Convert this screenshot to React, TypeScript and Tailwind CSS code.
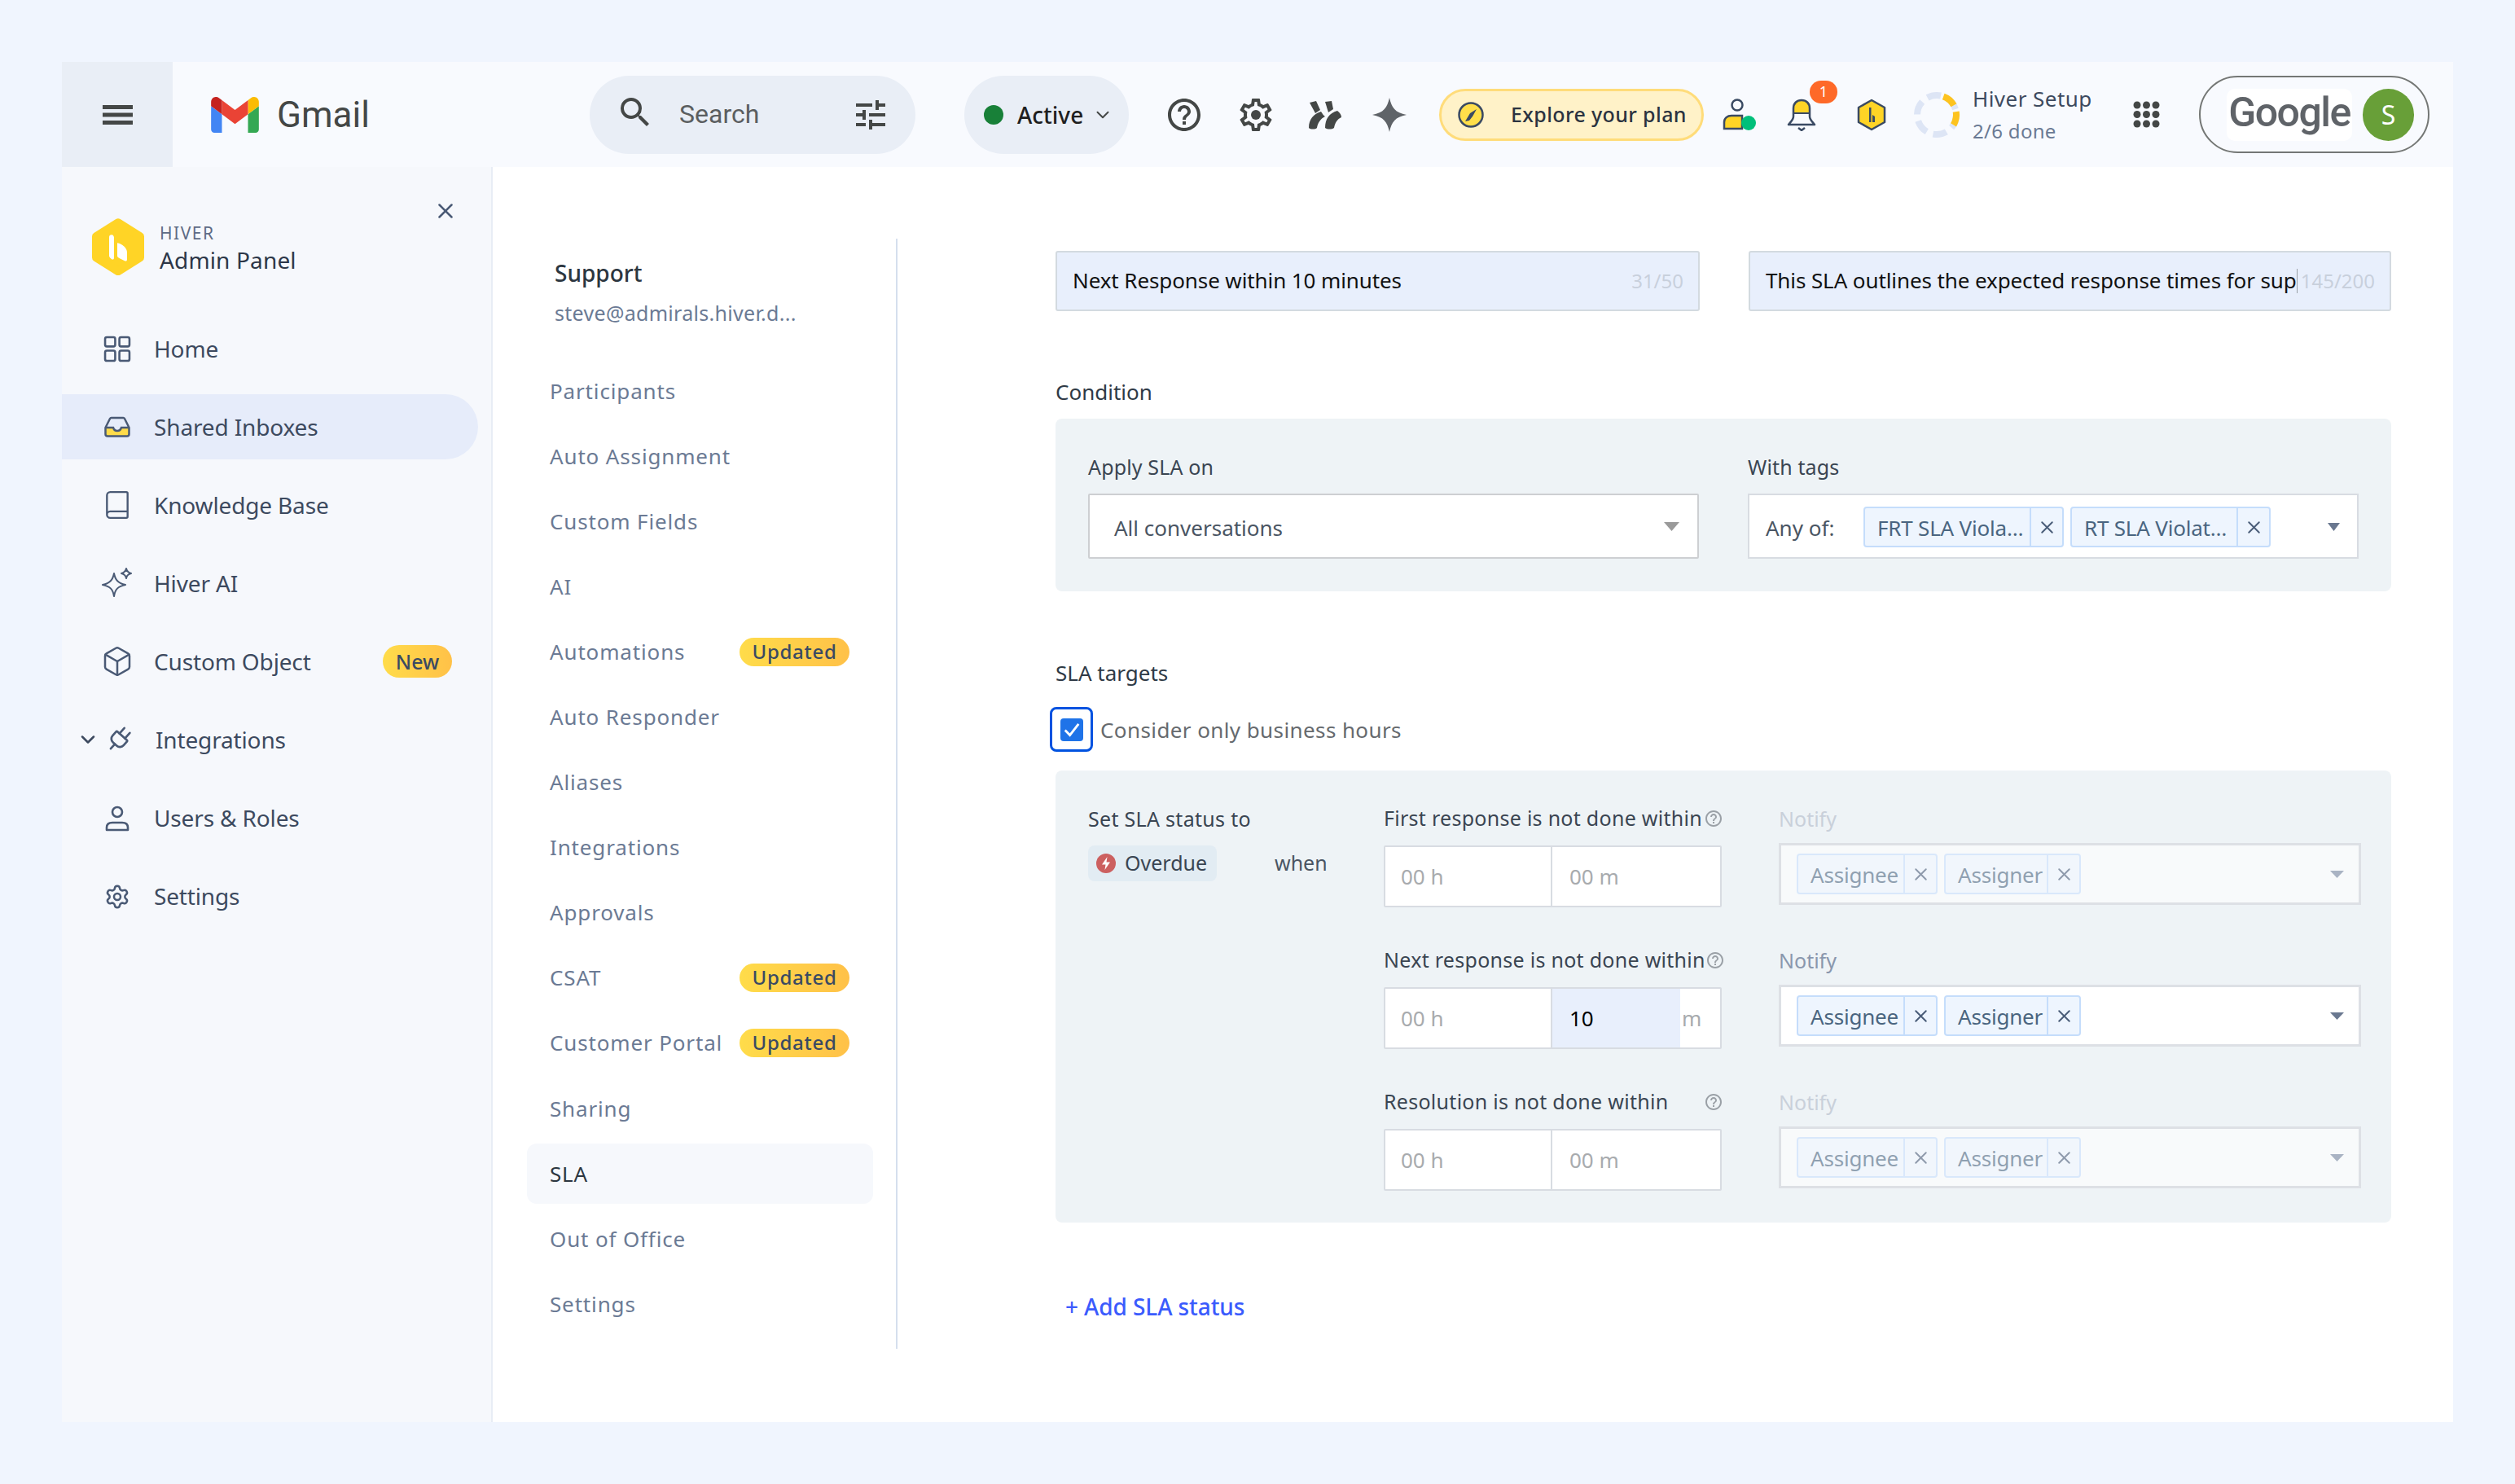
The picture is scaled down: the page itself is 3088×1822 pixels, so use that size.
import React from "react";
import { Book, Box, Plug, Settings, ChevronDown, X } from "lucide-react";

const GearPath = "M19.43 12.98c.04-.32.07-.64.07-.98 0-.34-.03-.66-.07-.98l2.11-1.65c.19-.15.24-.42.12-.64l-2-3.46c-.09-.16-.26-.25-.44-.25-.06 0-.12.01-.17.03l-2.49 1c-.52-.4-1.08-.73-1.69-.98l-.38-2.65C14.46 2.18 14.25 2 14 2h-4c-.25 0-.46.18-.49.42l-.38 2.65c-.61.25-1.17.59-1.69.98l-2.49-1c-.06-.02-.12-.03-.18-.03-.17 0-.34.09-.43.25l-2 3.46c-.13.22-.07.49.12.64l2.11 1.65c-.04.32-.07.65-.07.98 0 .33.03.66.07.98l-2.11 1.65c-.19.15-.24.42-.12.64l2 3.46c.09.16.26.25.44.25.06 0 .12-.01.17-.03l2.49-1c.52.4 1.08.73 1.69.98l.38 2.65c.03.24.24.42.49.42h4c.25 0 .46-.18.49-.42l.38-2.65c.61-.25 1.17-.59 1.69-.98l2.49 1c.06.02.12.03.18.03.17 0 .34-.09.43-.25l2-3.46c.12-.22.07-.49-.12-.64l-2.11-1.65zm-1.98-1.71c.04.31.05.52.05.73 0 .21-.02.43-.05.73l-.14 1.13.89.7 1.08.84-.7 1.21-1.27-.51-1.04-.42-.9.68c-.43.32-.84.56-1.25.73l-1.06.43-.16 1.13-.2 1.35h-1.4l-.19-1.35-.16-1.13-1.06-.43c-.43-.18-.83-.41-1.23-.71l-.91-.7-1.06.43-1.27.51-.7-1.21 1.08-.84.89-.7-.14-1.13c-.03-.31-.05-.54-.05-.74s.02-.43.05-.73l.14-1.13-.89-.7-1.08-.84.7-1.21 1.27.51 1.04.42.9-.68c.43-.32.84-.56 1.25-.73l1.06-.43.16-1.13.2-1.35h1.39l.19 1.35.16 1.13 1.06.43c.43.18.83.41 1.23.71l.91.7 1.06-.43 1.27-.51.7 1.21-1.07.85-.89.7.14 1.13z";

function HiverHex({ size = 64 }: { size?: number }) {
  return (
    <svg width={size} height={size * 1.1} viewBox="0 0 64 70" className="shrink-0">
      <polygon points="32,5 59,22 59,48 32,65 5,48 5,22" fill="#ffd426" stroke="#ffd426" strokeWidth="10" strokeLinejoin="round" />
      <path d="M24 20c2 0 3 2 3 4v24c0 2-1 3-3 2l-2-2c-1-1-1-2-1-3V23c0-2 1-3 3-3z" fill="#fff" />
      <path d="M31 30c6 1 12 6 12 12v8c0 2-1 3-3 2l-6-3c-2-1-3-2-3-3z" fill="#fff" />
    </svg>
  );
}

function MenuRow({ icon, label, active, badge, chevron }: { icon: React.ReactNode; label: string; active?: boolean; badge?: string; chevron?: boolean }) {
  return (
    <div className={`flex h-[80px] w-[511px] items-center rounded-r-full pr-[32px] ${active ? "bg-[#e6ecfa]" : ""} ${chevron ? "pl-[20px]" : "pl-[48px]"}`}>
      {chevron && <ChevronDown className="ml-[-2px] h-[28px] w-[28px] text-[#3d4a5f]" strokeWidth={2.2} />}
      <div className={`flex h-[40px] w-[40px] shrink-0 items-center justify-center ${chevron ? "ml-[4px]" : ""}`}>{icon}</div>
      <span className="mb-[1px] ml-[25px] text-[28px] leading-[36px] tracking-[-0.15px] text-[#3d4a5f]">{label}</span>
      {badge && (
        <span className="ml-auto flex h-[40px] w-[85px] items-center justify-center rounded-full bg-gradient-to-r from-[#ffdc4a] to-[#ffc148] text-[25px] font-medium text-[#3a4a63]">{badge}</span>
      )}
    </div>
  );
}

function NavRow({ label, badge, active }: { label: string; badge?: boolean; active?: boolean }) {
  return (
    <div className={`ml-[42px] flex h-[74px] w-[425px] items-center rounded-[12px] pl-[28px] pr-[29px] ${active ? "bg-[#f6f8fc]" : ""}`}>
      <span className={`text-[26px] leading-[36px] tracking-[0.85px] ${active ? "text-[#2c3640]" : "text-[#6b7a94]"}`}>{label}</span>
      {badge && (
        <span className="ml-auto flex h-[35px] w-[135px] items-center justify-center rounded-full bg-gradient-to-r from-[#ffdc4a] to-[#ffc148] text-[24px] font-medium tracking-[0.7px] text-[#3a4a63]">Updated</span>
      )}
    </div>
  );
}

function Tri({ color, w = 18, h = 10 }: { color: string; w?: number; h?: number }) {
  return (
    <svg width={w} height={h} viewBox="0 0 18 10" preserveAspectRatio="none" className="shrink-0">
      <path d="M0 0h18L9 10z" fill={color} />
    </svg>
  );
}

function Chip({ text, w, div, muted }: { text: string; w: string; div: string; muted?: boolean }) {
  return (
    <div className={`flex h-[50px] shrink-0 rounded-[4px] border-2 border-[#c5ddfb] bg-[#eef5fe] ${w} ${muted ? "opacity-60" : ""}`}>
      <div className={`flex items-center overflow-hidden whitespace-nowrap border-r-2 border-[#c5ddfb] pl-[15px] pt-[2px] text-[26px] tracking-[-0.2px] text-[#4a6580] ${div}`}>{text}</div>
      <div className="flex flex-1 items-center justify-center">
        <X className="h-[25px] w-[25px] text-[#4a5d78]" strokeWidth={1.9} />
      </div>
    </div>
  );
}

function NotifyBox({ muted }: { muted?: boolean }) {
  return (
    <div>
      <div className={`text-[25px] leading-[36px] ${muted ? "text-[#c9d0da]" : "text-[#8a97ad]"}`}>Notify</div>
      <div className={`mt-[12px] flex h-[76px] w-[715px] items-center border-[3px] border-[#dde0e5] pl-[19px] pr-[18px] ${muted ? "bg-[#f8fafb]" : "bg-white"}`}>
        <Chip text="Assignee" w="w-[173px]" div="w-[131px]" muted={muted} />
        <div className="w-[8px] shrink-0" />
        <Chip text="Assigner" w="w-[168px]" div="w-[126px]" muted={muted} />
        <div className="ml-auto">
          <Tri color={muted ? "#a9b3c3" : "#6a7890"} w={17} h={9} />
        </div>
      </div>
    </div>
  );
}

function HelpDot() {
  return (
    <svg width="24" height="24" viewBox="0 0 24 24" className="mr-[-2px] shrink-0" fill="#9aa0a6">
      <path d="M11 18h2v-2h-2v2zm1-16C6.48 2 2 6.48 2 12s4.48 10 10 10 10-4.48 10-10S17.52 2 12 2zm0 18c-4.41 0-8-3.59-8-8s3.59-8 8-8 8 3.59 8 8-3.59 8-8 8zm0-14c-2.21 0-4 1.79-4 4h2c0-1.1.9-2 2-2s2 .9 2 2c0 2-3 1.75-3 5h2c0-2.25 3-2.5 3-5 0-2.21-1.79-4-4-4z" />
    </svg>
  );
}

function TimeInput({ filled }: { filled?: boolean }) {
  return (
    <div className="mt-[15px] flex h-[76px] w-[415px] rounded-[2px] border-2 border-[#d8dce2] bg-white text-[26px] text-[#a8abae]">
      <div className="flex w-[205px] items-center border-r-2 border-[#d8dce2] pl-[19px]">00 h</div>
      {filled ? (
        <div className="flex flex-1 items-center">
          <div className="flex h-full w-[157px] items-center bg-[#e8effc] pl-[21px] text-black">10</div>
          <span className="ml-[2px]">m</span>
        </div>
      ) : (
        <div className="flex flex-1 items-center pl-[21px]">00 m</div>
      )}
    </div>
  );
}

function TargetRow({ label, filled, muted }: { label: string; filled?: boolean; muted?: boolean }) {
  return (
    <div className="flex h-[174px]">
      <div className="w-[415px] shrink-0">
        <div className="flex h-[36px] items-center justify-between whitespace-nowrap text-[25px] tracking-[0.28px] text-[#3a4552]">
          <span>{label}</span>
          <HelpDot />
        </div>
        <TimeInput filled={filled} />
      </div>
      <div className="ml-[70px]">
        <NotifyBox muted={muted} />
      </div>
    </div>
  );
}

const navItems: [string, boolean?][] = [
  ["Participants"],
  ["Auto Assignment"],
  ["Custom Fields"],
  ["AI"],
  ["Automations", true],
  ["Auto Responder"],
  ["Aliases"],
  ["Integrations"],
  ["Approvals"],
  ["CSAT", true],
  ["Customer Portal", true],
  ["Sharing"],
];

export default function App() {
  const sc = "#4a5a75";
  return (
    <div className="min-h-[1822px] bg-[#f0f5fe] pl-[76px] pt-[76px] font-['Noto_Sans',sans-serif]">
      <div className="flex h-[1670px] w-[2936px] flex-col bg-white">
        {/* top bar */}
        <div className="flex h-[129px] shrink-0 items-center bg-[#f8fafe]">
          <div className="flex h-full w-[136px] shrink-0 items-center justify-center bg-[#e9eef6]">
            <svg width="37" height="24" viewBox="0 0 37 24" fill="#444746">
              <rect width="37" height="5" />
              <rect y="9.5" width="37" height="5" />
              <rect y="19" width="37" height="5" />
            </svg>
          </div>
          <div className="flex w-[512px] shrink-0 items-center pl-[47px]">
            <svg width="59" height="44" viewBox="52 42 88 66">
              <path fill="#4285f4" d="M58 108h14V74L52 59v43c0 3.32 2.69 6 6 6" />
              <path fill="#34a853" d="M120 108h14c3.32 0 6-2.69 6-6V59l-20 15" />
              <path fill="#fbbc04" d="M120 48v26l20-15v-8c0-7.42-8.47-11.65-14.4-7.2" />
              <path fill="#ea4335" d="M72 74V48l24 18 24-18v26L96 92" />
              <path fill="#c5221f" d="M52 51v8l20 15V48l-5.6-4.2c-5.94-4.45-14.4-.22-14.4 7.2" />
            </svg>
            <span className="ml-[22px] font-['Roboto',sans-serif] text-[44px] leading-none text-[#444746]">Gmail</span>
          </div>
          <div className="flex h-[96px] w-[400px] shrink-0 items-center rounded-full bg-[#e9eef6] pl-[32px]">
            <svg width="48" height="48" viewBox="0 0 24 24" fill="#444746" className="mb-[5px]">
              <path d="M15.5 14h-.79l-.28-.27A6.471 6.471 0 0 0 16 9.5 6.5 6.5 0 1 0 9.5 16c1.61 0 3.09-.59 4.23-1.57l.27.28v.79l5 4.99L20.49 19l-4.99-5zm-6 0C7.01 14 5 11.99 5 9.5S7.01 5 9.5 5 14 7.01 14 9.5 11.99 14 9.5 14z" />
            </svg>
            <span className="mb-[2px] ml-[30px] font-['Roboto',sans-serif] text-[32px] text-[#5b5e60]">Search</span>
            <svg width="48" height="48" viewBox="0 0 24 24" fill="#444746" className="ml-auto mr-[31px]">
              <path d="M3 17v2h6v-2H3zM3 5v2h10V5H3zm10 16v-2h8v-2h-8v-2h-2v6h2zM7 9v2H3v2h4v2h2V9H7zm14 4v-2H11v2h10zm-6-4h2V7h4V5h-4V3h-2v6z" />
            </svg>
          </div>
          <div className="ml-[60px] flex h-[96px] w-[202px] shrink-0 items-center rounded-full bg-[#e9eef6] pl-[24px]">
            <span className="h-[24px] w-[24px] rounded-full bg-[#188038]" />
            <span className="ml-[17px] text-[28px] font-medium text-[#1f1f1f]">Active</span>
            <ChevronDown className="ml-[11px] h-[26px] w-[26px] text-[#444746]" strokeWidth={1.8} />
          </div>
          <svg width="48" height="48" viewBox="0 0 24 24" fill="#444746" className="ml-[44px] shrink-0">
            <path d="M11 18h2v-2h-2v2zm1-16C6.48 2 2 6.48 2 12s4.48 10 10 10 10-4.48 10-10S17.52 2 12 2zm0 18c-4.41 0-8-3.59-8-8s3.59-8 8-8 8 3.59 8 8-3.59 8-8 8zm0-14c-2.21 0-4 1.79-4 4h2c0-1.1.9-2 2-2s2 .9 2 2c0 2-3 1.75-3 5h2c0-2.25 3-2.5 3-5 0-2.21-1.79-4-4-4z" />
          </svg>
          <svg width="48" height="48" viewBox="0 0 24 24" fill="#444746" className="ml-[40px] shrink-0">
            <path d={GearPath} />
            <circle cx="12" cy="12" r="3" />
          </svg>
          <svg width="42" height="36" viewBox="0 0 42 36" fill="#444746" className="ml-[40px] shrink-0">
            <path d="M2 3l8-2 5 11-6 4z" />
            <path d="M21 2l8-1 2 10-6 4z" />
            <path d="M1 34c0-11 6-17 15-20 2 3 3 5 5 6-6 3-9 8-10 14-2 2-8 2-10 0z" />
            <path d="M21 34c0-11 5-18 15-21 3 2 5 5 5 8-5 2-8 7-9 13-3 2-8 2-11 0z" />
          </svg>
          <svg width="42" height="42" viewBox="0 0 24 24" fill="#5f6368" className="ml-[37px] shrink-0">
            <path d="M12 0c1.500 7 4 10.500 12 12-8 1.500-10.500 5-12 12-1.500-7-4-10.500-12-12 8-1.500 10.500-5 12-12z" />
          </svg>
          <div className="ml-[40px] flex h-[64px] w-[325px] shrink-0 items-center rounded-full border-[3px] border-[#ffdc7a] bg-[#fff2c8] pl-[20px]">
            <svg width="32" height="32" viewBox="0 0 32 32" className="shrink-0">
              <circle cx="16" cy="16" r="14.500" fill="#ffdf4a" stroke="#3a4a63" strokeWidth="2.500" />
              <path d="M23 9l-5 9-4 5-5 1 6-10z" fill="#3a4a63" />
            </svg>
            <span className="ml-[33px] pt-[1px] text-[25px] font-medium tracking-[0.38px] text-[#2b3340]">Explore your plan</span>
          </div>
          <svg width="41" height="40" viewBox="0 0 41 40" className="ml-[23px] shrink-0">
            <circle cx="18" cy="8" r="6.500" fill="none" stroke="#3a4a63" strokeWidth="2.500" />
            <path d="M2 37v-8c0-5 4-8 9-8h13v16z" fill="#ffd426" stroke="#3a4a63" strokeWidth="2.500" />
            <circle cx="32" cy="30" r="9" fill="#00bf7a" />
          </svg>
          <div className="relative ml-[38px] h-[40px] w-[36px] shrink-0">
            <svg width="36" height="40" viewBox="0 0 36 40">
              <path d="M8 18V12C8 6 12 2 18 2s10 4 10 10v6z" fill="#ffd426" />
              <path d="M8 12C8 6 12 2 18 2s10 4 10 10v10c0 4 3 6 6 10H2c3-4 6-6 6-10z" fill="none" stroke="#3a4a63" strokeWidth="2.500" strokeLinejoin="round" />
              <path d="M8 18h20" stroke="#3a4a63" strokeWidth="2" />
              <path d="M14 36l4 3 4-3" fill="none" stroke="#3a4a63" strokeWidth="2.500" />
            </svg>
            <span className="absolute left-[28px] top-[-22px] flex h-[28px] w-[34px] items-center justify-center rounded-full bg-[#fe6928] text-[18px] text-white">1</span>
          </div>
          <svg width="36" height="40" viewBox="0 0 36 40" className="ml-[50px] shrink-0">
            <polygon points="18,2 34,11 34,29 18,38 2,29 2,11" fill="#ffd426" stroke="#3a4a63" strokeWidth="2.500" strokeLinejoin="round" />
            <path d="M15 11h2.500v18H15zM19 20l3 2v7h-3z" fill="#3a4a63" />
          </svg>
          <svg width="56" height="56" viewBox="0 0 56 56" className="ml-[34px] shrink-0">
            <circle cx="28" cy="28" r="24" fill="none" stroke="#dde5f5" strokeWidth="8" strokeDasharray="17 8.130" />
            <circle cx="28" cy="28" r="24" fill="none" stroke="#fdc31f" strokeWidth="8" strokeDasharray="17 8.130 17 108.500" transform="rotate(-70 28 28)" />
          </svg>
          <div className="ml-[16px] w-[197px] shrink-0">
            <div className="text-[26px] leading-[38px] tracking-[0.45px] text-[#3d4a5f]">Hiver Setup</div>
            <div className="mt-[2px] text-[24px] leading-[38px] tracking-[0.3px] text-[#6b7a94]">2/6 done</div>
          </div>
          <svg width="33" height="33" viewBox="0 0 33 33" fill="#444746" className="shrink-0">
            <circle cx="5" cy="5" r="4.500" /><circle cx="16.500" cy="5" r="4.500" /><circle cx="28" cy="5" r="4.500" />
            <circle cx="5" cy="16.500" r="4.500" /><circle cx="16.500" cy="16.500" r="4.500" /><circle cx="28" cy="16.500" r="4.500" />
            <circle cx="5" cy="28" r="4.500" /><circle cx="16.500" cy="28" r="4.500" /><circle cx="28" cy="28" r="4.500" />
          </svg>
          <div className="ml-[48px] flex h-[95px] w-[283px] shrink-0 items-center rounded-full border-2 border-[#747775] pl-[32px]">
            <div className="flex h-[64px] w-[154px] items-center justify-center rounded-[10px] bg-white pb-[6px] font-['Roboto',sans-serif] text-[50px] font-medium leading-none tracking-[-1.5px] text-[#5f6368]">Google</div>
            <div className="ml-[13px] flex h-[64px] w-[63px] items-center justify-center rounded-full bg-[#689f38] text-[32px] text-white">S</div>
          </div>
        </div>

        <div className="flex min-h-0 flex-1">
          {/* sidebar */}
          <div className="w-[529px] shrink-0 border-r-2 border-[#e8edf5] bg-[#f6f8fc]">
            <div className="flex h-[183px] items-start pt-[39px]">
              <div className="ml-[37px] mt-[24px] flex items-center">
                <HiverHex />
                <div className="ml-[19px]">
                  <div className="mt-[2px] text-[21px] leading-[28px] tracking-[1.5px] text-[#5e6b85]">HIVER</div>
                  <div className="mt-[1px] text-[28px] leading-[36px] tracking-[0.15px] text-[#2d3748]">Admin Panel</div>
                </div>
              </div>
              <X className="ml-auto mr-[41px] h-[30px] w-[30px] text-[#4a5a75]" strokeWidth={2} />
            </div>
            <div className="flex flex-col gap-[16.1px]">
              <MenuRow label="Home" icon={
                <svg width="34" height="33" viewBox="0 0 32 32" fill="none" stroke={sc} strokeWidth="2.500">
                  <rect x="1.500" y="2" width="12" height="11" rx="2" /><rect x="18.500" y="2" width="12" height="11" rx="2" />
                  <rect x="1.500" y="18" width="12" height="12" rx="2" /><rect x="18.500" y="18" width="12" height="12" rx="2" />
                </svg>
              } />
              <MenuRow active label="Shared Inboxes" icon={
                <svg width="32" height="26" viewBox="0 0 32 26">
                  <path d="M2 14h9c1 3 3 4 5 4s4-1 5-4h9v8a2 2 0 0 1-2 2H4a2 2 0 0 1-2-2z" fill="#ffdc4a" />
                  <path d="M1.500 14 7 3a2 2 0 0 1 2-1h14a2 2 0 0 1 2 1l5.500 11v8a2.500 2.500 0 0 1-2.500 2.500H4A2.500 2.500 0 0 1 1.500 22zM2 14h9c1 3 3 4 5 4s4-1 5-4h9" fill="none" stroke={sc} strokeWidth="2.500" />
                </svg>
              } />
              <MenuRow label="Knowledge Base" icon={<Book className="h-[38px] w-[38px]" color={sc} strokeWidth={1.5} />} />
              <MenuRow label="Hiver AI" icon={
                <svg width="38" height="38" viewBox="0 0 38 38" fill="none" stroke={sc} strokeWidth="2" strokeLinejoin="round">
                  <path d="M15 7c1.500 8 5 12 14 14-9 2-12.500 5-14 14-1.500-9-5-12-14-14 9-2 12.500-6 14-14z" />
                  <path d="M30 1c.6 3 2 5 6 6-4 1-5.400 2.500-6 6-.6-3.500-2-5-6-6 4-1 5.400-3 6-6z" />
                </svg>
              } />
              <MenuRow label="Custom Object" badge="New" icon={<Box className="h-[40px] w-[40px]" color={sc} strokeWidth={1.5} />} />
              <MenuRow chevron label="Integrations" icon={<Plug className="h-[36px] w-[36px] rotate-[42deg]" color={sc} strokeWidth={1.8} />} />
              <MenuRow label="Users & Roles" icon={
                <svg width="30" height="32" viewBox="0 0 30 32" fill="none" stroke={sc} strokeWidth="2.600">
                  <circle cx="15" cy="8" r="6" />
                  <path d="M2 30v-3c0-4 3-6 7-6h12c4 0 7 2 7 6v3z" strokeLinejoin="round" />
                </svg>
              } />
              <MenuRow label="Settings" icon={<Settings className="h-[32px] w-[32px]" color={sc} strokeWidth={1.9} />} />
            </div>
          </div>

          {/* nav column */}
          <div className="mt-[88px] h-[1363px] w-[497px] shrink-0 border-r-2 border-[#d5dfee] pt-[24px]">
            <div className="pl-[76px] text-[28px] font-medium leading-[36px] text-[#2c3640]">Support</div>
            <div className="mt-[13px] pl-[76px] text-[25px] leading-[36px] tracking-[0.3px] text-[#6b7a94]">steve@admirals.hiver.d...</div>
            <div className="mt-[41px] flex flex-col gap-[6.05px]">
              {navItems.map(([l, b]) => (
                <NavRow key={l} label={l} badge={b} />
              ))}
              <NavRow label="SLA" active />
              <NavRow label="Out of Office" />
              <NavRow label="Settings" />
            </div>
          </div>

          {/* main */}
          <div className="min-w-0 flex-1 pl-[194px] pt-[103px]">
            <div className="flex w-[1640px] justify-between">
              <div className="flex h-[74px] w-[791px] items-center rounded-[3px] border-2 border-[#d3dae0] bg-[#e8effc] pl-[19px] pr-[18px]">
                <span className="mb-[1px] text-[26px] tracking-[-0.1px] text-[#111]">Next Response within 10 minutes</span>
                <span className="ml-auto text-[24px] text-[#c8d0dc]">31/50</span>
              </div>
              <div className="flex h-[74px] w-[789px] items-center rounded-[3px] border-2 border-[#d3dae0] bg-[#e8effc] pl-[19px] pr-[18px]">
                <span className="mb-[1px] whitespace-nowrap text-[26px] tracking-[-0.1px] text-[#111]">This SLA outlines the expected response times for sup</span>
                <span className="h-[30px] w-[1px] bg-[#9aa0a6]" />
                <span className="ml-auto text-[24px] text-[#c8d0dc]">145/200</span>
              </div>
            </div>

            <div className="mt-[81px] text-[26px] leading-[36px] text-[#2f3a46]">Condition</div>
            <div className="mt-[15px] flex h-[212px] w-[1640px] gap-[60px] rounded-[8px] bg-[#eef3f6] pl-[40px] pt-[41px]">
              <div>
                <div className="text-[25px] leading-[36px] tracking-[0.15px] text-[#3a4552]">Apply SLA on</div>
                <div className="mt-[15px] flex h-[80px] w-[750px] items-center rounded-[2px] border-2 border-[#cdcfd2] bg-white pl-[30px] pr-[22px]">
                  <span className="pt-[4px] text-[26px] text-[#4a5563]">All conversations</span>
                  <div className="ml-auto"><Tri color="#9a9a9a" w={19} h={11} /></div>
                </div>
              </div>
              <div>
                <div className="text-[25px] leading-[36px] tracking-[0.15px] text-[#3a4552]">With tags</div>
                <div className="mt-[15px] flex h-[80px] w-[750px] items-start border-2 border-[#d8dce2] bg-white pl-[20px] pr-[21px] pt-[14px]">
                  <span className="flex h-[50px] w-[120px] items-center pt-[3px] text-[26px] text-[#4a5563]">Any of:</span>
                  <Chip text="FRT SLA Viola…" w="w-[246px]" div="w-[204px]" />
                  <div className="w-[8px] shrink-0" />
                  <Chip text="RT SLA Violat…" w="w-[246px]" div="w-[204px]" />
                  <div className="ml-auto mt-[20px]"><Tri color="#6a7890" w={15} h={10} /></div>
                </div>
              </div>
            </div>

            <div className="mt-[82px] text-[26px] leading-[36px] text-[#2f3a46]">SLA targets</div>
            <div className="mt-[24px] flex h-[55px] items-center">
              <div className="ml-[-7px] flex h-[55px] w-[53px] items-center justify-center rounded-[8px] border-[3px] border-[#0052e0]">
                <div className="flex h-[28px] w-[28px] items-center justify-center rounded-[4px] bg-[#1f73e8]">
                  <svg width="26" height="26" viewBox="0 0 22 22" fill="none" stroke="#fff" strokeWidth="2.400"><path d="M4 11.500l5 5L18 5" /></svg>
                </div>
              </div>
              <span className="ml-[9px] pt-[1px] text-[26px] tracking-[0.4px] text-[#666a6e]">Consider only business hours</span>
            </div>

            <div className="mt-[23px] flex h-[555px] w-[1640px] rounded-[8px] bg-[#eef3f6] pl-[40px] pt-[41px]">
              <div className="w-[363px] shrink-0">
                <div className="text-[25px] leading-[36px] tracking-[0.3px] text-[#3a4552]">Set SLA status to</div>
                <div className="mt-[15px] flex items-center">
                  <div className="flex h-[44px] w-[158px] items-center rounded-[8px] bg-[#e2ecf3] pl-[10px]">
                    <svg width="24" height="24" viewBox="0 0 24 24" className="shrink-0">
                      <circle cx="12" cy="12" r="12" fill="#cc6060" />
                      <path d="M13.500 4 7 13.500h4.500L10.500 20 17 10.500h-4.500z" fill="#fff" />
                    </svg>
                    <span className="ml-[11px] text-[25px] text-[#3a4552]">Overdue</span>
                  </div>
                  <span className="ml-[71px] text-[25px] text-[#4a5563]">when</span>
                </div>
              </div>
              <div>
                <TargetRow label="First response is not done within" muted />
                <TargetRow label="Next response is not done within" filled />
                <TargetRow label="Resolution is not done within" muted />
              </div>
            </div>

            <div className="ml-[12px] mt-[85px] text-[28px] font-medium leading-[36px] tracking-[-0.1px] text-[#3b5bfd]">+ Add SLA status</div>
          </div>
        </div>
      </div>
    </div>
  );
}
